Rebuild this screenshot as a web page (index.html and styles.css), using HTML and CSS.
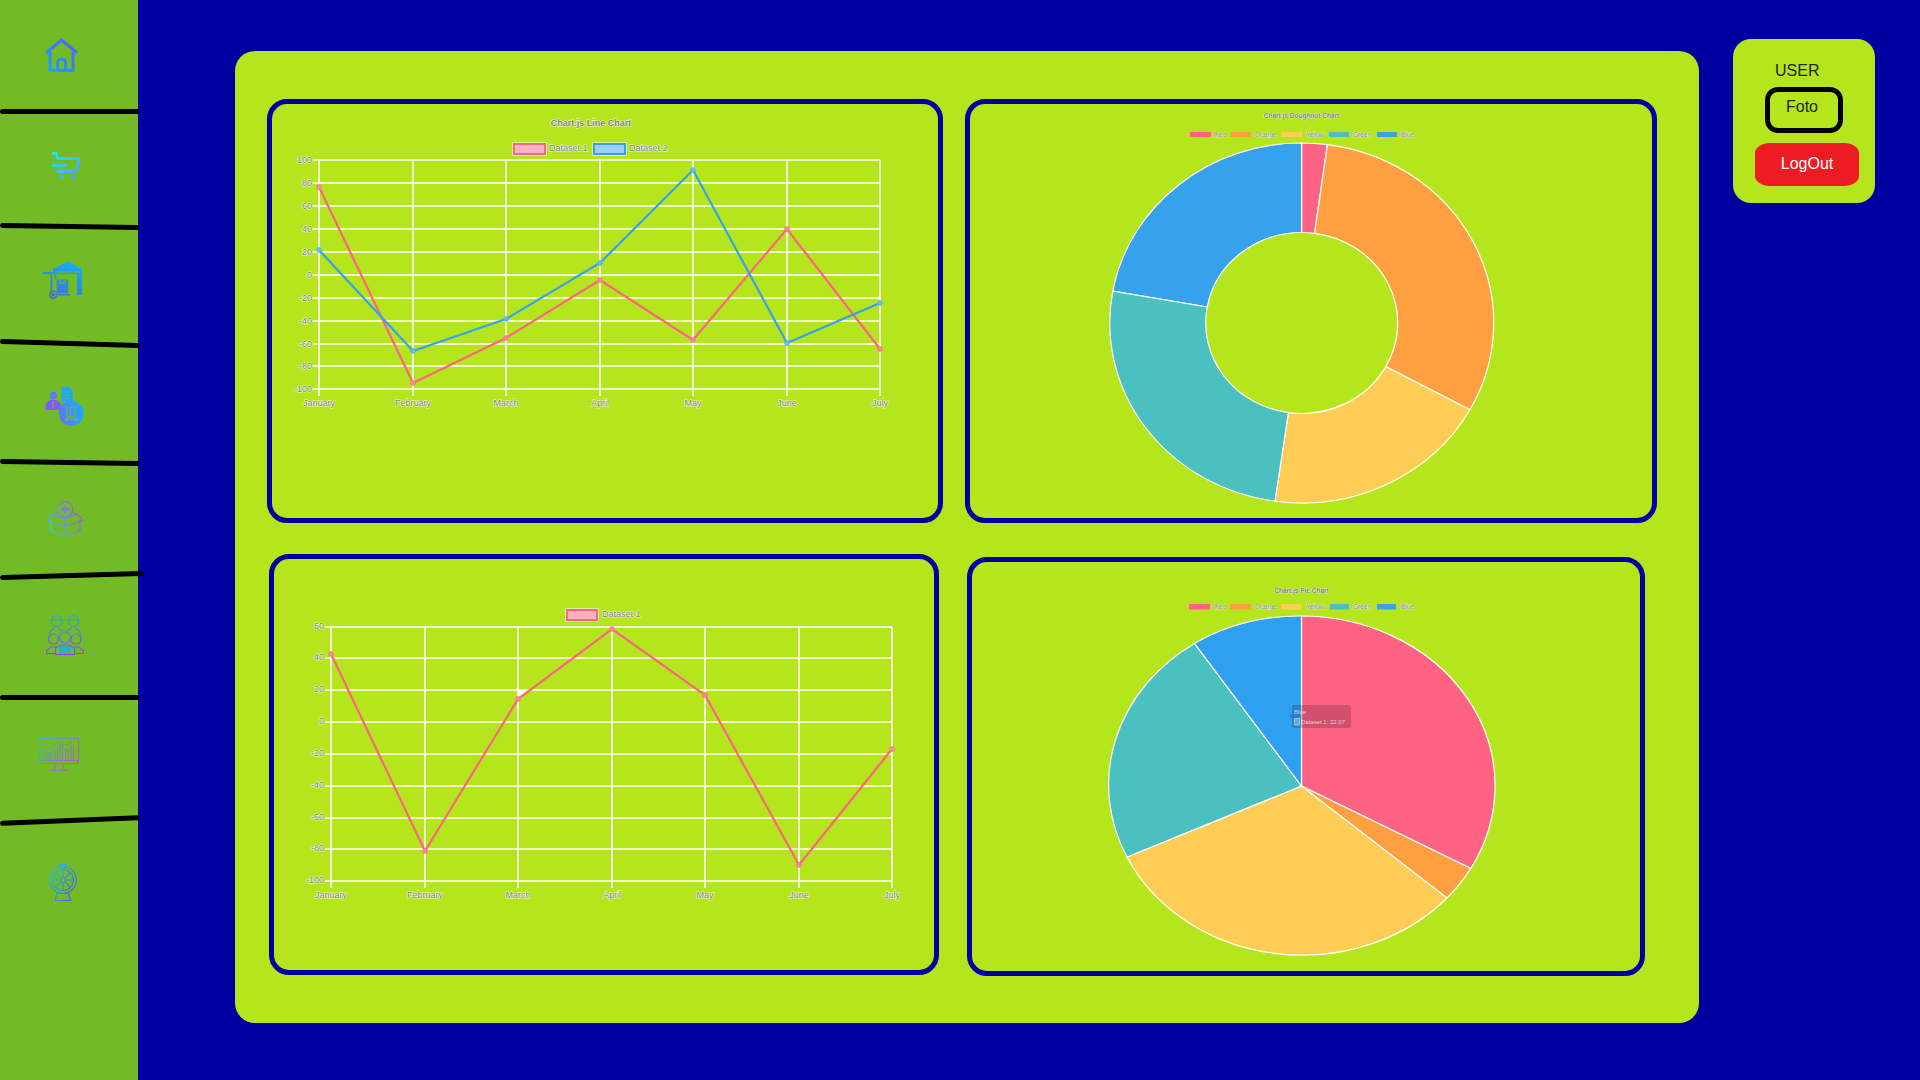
FILE: index.html
```html
<!DOCTYPE html>
<html lang="en">
<head>
    <meta charset="UTF-8">
    <meta name="viewport" content="width=device-width, initial-scale=1.0">
    <title>Dashboard</title>
    <link rel="stylesheet" href="styles.css">
</head>
<body>
    <nav class="sidebar">
        <a class="nav-item item-home" href="#">
            <svg class="icon icon-home" viewBox="0 0 33 34" fill="none" stroke="url(#gradHome)" stroke-width="3">
                <defs>
                    <linearGradient id="gradHome" gradientUnits="userSpaceOnUse" x1="0" y1="34" x2="33" y2="0">
                        <stop offset="0" stop-color="#12aaff"/>
                        <stop offset="1" stop-color="#5a55ff"/>
                    </linearGradient>
                </defs>
                <path d="M1 15 16.500 2 32 15"/>
                <path d="M5 14V32.300H28V14"/>
                <path d="M12.500 32V25a4 4 0 0 1 8 0v7"/>
            </svg>
        </a>
        <hr class="divider">
        <a class="nav-item item-cart" href="#">
            <svg class="icon icon-cart" viewBox="0 0 28 27" fill="none" stroke="url(#gradCart)" stroke-width="2.800">
                <defs>
                    <linearGradient id="gradCart" gradientUnits="userSpaceOnUse" x1="0" y1="0" x2="20" y2="27">
                        <stop offset="0" stop-color="#14f0ff"/>
                        <stop offset="1" stop-color="#4aa4ff"/>
                    </linearGradient>
                </defs>
                <path d="M0 1.300H4L6 6.500H27L24.300 19.500H5"/>
                <path d="M0 13.500H15"/>
                <circle cx="9.500" cy="25" r="2" fill="url(#gradCart)" stroke="none"/>
                <circle cx="21" cy="25" r="2" fill="url(#gradCart)" stroke="none"/>
            </svg>
        </a>
        <hr class="divider tilt-small">
        <a class="nav-item item-store" href="#">
            <svg class="icon icon-store" viewBox="0 0 39 38" fill="none" stroke="url(#gradStore)" stroke-width="1.800">
                <defs>
                    <linearGradient id="gradStore" gradientUnits="userSpaceOnUse" x1="30" y1="0" x2="12" y2="38">
                        <stop offset="0" stop-color="#0cb0ff"/>
                        <stop offset="1" stop-color="#4a70c4"/>
                    </linearGradient>
                </defs>
                <path d="M10 8 24.700 0.500 39 8V13H10Z" fill="url(#gradStore)" stroke="none"/>
                <path d="M12 11H37" stroke="#73bb26" stroke-width="1"/>
                <rect x="34" y="13" width="5" height="21" fill="url(#gradStore)" stroke="none"/>
                <path d="M0 12H8.500V33"/>
                <path d="M12 13 13 18"/>
                <rect x="13.700" y="18.300" width="11.600" height="14" fill="url(#gradStore)" stroke="none"/>
                <path d="M17 18.500V23L19.500 21.500 22 23V18.500" stroke="#73bb26" stroke-width="1"/>
                <circle cx="10.300" cy="33.700" r="3.500"/>
                <circle cx="10.300" cy="33.700" r="1"/>
                <path d="M15 33.700H27"/>
            </svg>
        </a>
        <hr class="divider tilt-medium">
        <a class="nav-item item-staff" href="#">
            <svg class="icon icon-staff" viewBox="0 0 40 41">
                <defs>
                    <linearGradient id="gradStaff" gradientUnits="userSpaceOnUse" x1="0" y1="30" x2="40" y2="16">
                        <stop offset="0" stop-color="#7a5cff"/>
                        <stop offset="1" stop-color="#12b4ff"/>
                    </linearGradient>
                </defs>
                <circle cx="8.300" cy="9.500" r="3.700" fill="#5a78ff"/>
                <path d="M0.500 24V21C0.500 16 4 13.800 8 13.800S16 16 16 21V24Z" fill="#7a5cff"/>
                <path d="M8 15V22" stroke="#73bb26" stroke-width="1.200"/>
                <path d="M16.700 0.700H24L27.700 4.500V15.700H16.700Z" fill="#1ca6ff"/>
                <path d="M19 6H25M19 9H25M19 12H25" stroke="#73bb26" stroke-width="0.800"/>
                <circle cx="26.300" cy="27.300" r="12.500" fill="url(#gradStaff)"/>
                <path d="M20 20.500H22V33H32M22 31H30V21H25V31" fill="none" stroke="#73bb26" stroke-width="1"/>
                <circle cx="21.500" cy="34" r="1.200" fill="#73bb26"/>
                <circle cx="31" cy="34" r="1.200" fill="#73bb26"/>
            </svg>
        </a>
        <hr class="divider tilt-small">
        <a class="nav-item item-box" href="#">
            <svg class="icon icon-box" viewBox="0 0 36 36" fill="none" stroke="url(#gradBox)" stroke-width="1.300">
                <defs>
                    <linearGradient id="gradBox" gradientUnits="userSpaceOnUse" x1="0" y1="30" x2="36" y2="10">
                        <stop offset="0" stop-color="#30d0e0"/>
                        <stop offset="1" stop-color="#a84ce8"/>
                    </linearGradient>
                </defs>
                <circle cx="18" cy="8.300" r="7.700"/>
                <path d="M18 4.500V12M14 8.300H22" stroke-width="2.400"/>
                <path d="M10.500 12 4.500 13.500 0.500 19 15 25 17.500 21 20 25 35.500 19 31 13.500 25.500 12"/>
                <path d="M4.500 13.500 17.500 17.500 31 13.500"/>
                <path d="M3.500 20.500V29.500L17.500 35 33 29.500V20.500"/>
                <path d="M17.500 21V35"/>
            </svg>
        </a>
        <hr class="divider tilt-back-medium">
        <a class="nav-item item-team" href="#">
            <svg class="icon icon-team" viewBox="0 0 38 41" fill="none" stroke="url(#gradTeam)" stroke-width="1.200">
                <defs>
                    <linearGradient id="gradTeam" gradientUnits="userSpaceOnUse" x1="19" y1="0" x2="19" y2="41">
                        <stop offset="0" stop-color="#18b8d0"/>
                        <stop offset="1" stop-color="#9a3ee8"/>
                    </linearGradient>
                    <pattern id="checks" width="3" height="3" patternUnits="userSpaceOnUse">
                        <rect width="1.500" height="1.500" fill="#8a48e0"/>
                        <rect x="1.500" y="1.500" width="1.500" height="1.500" fill="#8a48e0"/>
                    </pattern>
                </defs>
                <circle cx="10.700" cy="7" r="5.500"/>
                <circle cx="27.300" cy="7" r="5.500"/>
                <path d="M5.200 6H16.200M21.800 6H32.800"/>
                <path d="M8 13V15L4 17V22M13 13V15L17 17M25 13V15L21 17M30 13V15L34 17V22"/>
                <path d="M2.500 25a5 5 0 0 1 10 0c0 3-2 5-5 5s-5-2-5-5Z"/>
                <path d="M25 25a5 5 0 0 1 10 0c0 3-2 5-5 5s-5-2-5-5Z"/>
                <path d="M13.500 23.500a5.500 5.500 0 0 1 11 0c0 3-2.500 5.500-5.500 5.500s-5.500-2.500-5.500-5.500Z"/>
                <path d="M0.500 39.500V36.500L5 33H9.500L9.500 39.500ZM28.500 39.500V33H33L37.500 36.500V39.500ZM9.500 40.500V34L15 31H23L28.500 34V40.500Z"/>
                <rect x="13" y="32" width="12" height="8" fill="url(#checks)" stroke="none"/>
            </svg>
        </a>
        <hr class="divider">
        <a class="nav-item item-stats" href="#">
            <svg class="icon icon-stats" viewBox="0 0 40 33" fill="none" stroke="url(#gradStats)" stroke-width="1">
                <defs>
                    <linearGradient id="gradStats" gradientUnits="userSpaceOnUse" x1="0" y1="0" x2="40" y2="30">
                        <stop offset="0" stop-color="#18d0b8"/>
                        <stop offset="1" stop-color="#d83cd8"/>
                    </linearGradient>
                </defs>
                <rect x="0.500" y="0.500" width="39" height="25"/>
                <path d="M0.500 22.500H39.500"/>
                <path d="M5.500 6.500 11 10 21.500 3 27.500 7.500 33 4"/>
                <path d="M5 22V11H7.500V22M10 22V15H12.500V22M16 22V11H18.500V22M21 22V6.500H23.500V22M26.500 22V11.500H29V22M32 22V8.500H34.500V22"/>
                <path d="M17 26 16 32M24 26 25 32M10 32.300H30"/>
            </svg>
        </a>
        <hr class="divider tilt-back-large">
        <a class="nav-item item-fan" href="#">
            <svg class="icon icon-fan" viewBox="0 0 28 37" fill="none" stroke="url(#gradFan)" stroke-width="1.200">
                <defs>
                    <linearGradient id="gradFan" gradientUnits="userSpaceOnUse" x1="0" y1="10" x2="28" y2="24">
                        <stop offset="0" stop-color="#18c8d0"/>
                        <stop offset="1" stop-color="#4a60f0"/>
                    </linearGradient>
                </defs>
                <circle cx="14" cy="16" r="13.500"/>
                <circle cx="14" cy="16" r="10.500"/>
                <circle cx="14" cy="16" r="2.500"/>
                <path d="M14 5.500V13.500M14 18.500V26.500M3.500 16H11.500M16.500 16H24.500M6.600 8.600 12.200 14.200M15.800 17.800 21.400 23.400M21.400 8.600 15.800 14.200M12.200 17.800 6.600 23.400"/>
                <path d="M10.500 0.500H17.500L15.500 5H12.500Z"/>
                <path d="M8 29.500H19.500L21.500 36.500H6Z"/>
            </svg>
        </a>
    </nav>

    <main class="dashboard">
        <div class="chart-row">
            <section class="chart-card card-line">
                <svg class="chart" viewBox="272 104 666 414">
                    <text class="chart-title" x="591" y="126">Chart.js Line Chart</text>
                    <rect class="legend-box" x="514" y="144" width="31" height="10" fill="#ffb1c1" stroke="#ff6384"/>
                    <text class="chart-label" x="549" y="151">Dataset 1</text>
                    <rect class="legend-box" x="594" y="144" width="31" height="10" fill="#9ad0f5" stroke="#36a2eb"/>
                    <text class="chart-label" x="629" y="151">Dataset 2</text>

                    <path class="grid" d="M313 160H880M313 183H880M313 206H880M313 229H880M313 252H880M313 275H880M313 298H880M313 321H880M313 344H880M313 366H880M313 389H880"/>
                    <path class="grid" d="M319 160V396M413 160V396M506 160V396M600 160V396M693 160V396M787 160V396M880 160V396"/>

                    <g class="y-ticks">
                        <text class="chart-label" x="312" y="163">100</text>
                        <text class="chart-label" x="312" y="186">80</text>
                        <text class="chart-label" x="312" y="209">60</text>
                        <text class="chart-label" x="312" y="232">40</text>
                        <text class="chart-label" x="312" y="255">20</text>
                        <text class="chart-label" x="312" y="278">0</text>
                        <text class="chart-label" x="312" y="301">-20</text>
                        <text class="chart-label" x="312" y="324">-40</text>
                        <text class="chart-label" x="312" y="347">-60</text>
                        <text class="chart-label" x="312" y="369">-80</text>
                        <text class="chart-label" x="312" y="392">-100</text>
                    </g>
                    <g class="x-ticks">
                        <text class="chart-label" x="319" y="406">January</text>
                        <text class="chart-label" x="413" y="406">February</text>
                        <text class="chart-label" x="506" y="406">March</text>
                        <text class="chart-label" x="600" y="406">April</text>
                        <text class="chart-label" x="693" y="406">May</text>
                        <text class="chart-label" x="787" y="406">June</text>
                        <text class="chart-label" x="880" y="406">July</text>
                    </g>

                    <polyline class="line line-red" points="319,187 413,383 506,338 600,280 693,340 787,229 880,349"/>
                    <polyline class="line line-blue" points="319,250 413,351 506,319 600,263 693,170 787,343 880,303"/>
                    <g class="points-red">
                        <circle cx="319" cy="187" r="2.500"/><circle cx="413" cy="383" r="2.500"/><circle cx="506" cy="338" r="2.500"/><circle cx="600" cy="280" r="2.500"/><circle cx="693" cy="340" r="2.500"/><circle cx="787" cy="229" r="2.500"/><circle cx="880" cy="349" r="2.500"/>
                    </g>
                    <g class="points-blue">
                        <circle cx="319" cy="250" r="2.500"/><circle cx="413" cy="351" r="2.500"/><circle cx="506" cy="319" r="2.500"/><circle cx="600" cy="263" r="2.500"/><circle cx="693" cy="170" r="2.500"/><circle cx="787" cy="343" r="2.500"/><circle cx="880" cy="303" r="2.500"/>
                    </g>
                </svg>
            </section>
            <section class="chart-card card-doughnut">
                <svg class="chart" viewBox="970 104 682 414">
                    <text class="chart-title small-title" x="1301.500" y="118">Chart.js Doughnut Chart</text>
                    <g class="legend-small">
                        <rect x="1190" y="132" width="21" height="5" fill="#ff6384"/>
                        <rect x="1231" y="132" width="20" height="5" fill="#ff9f40"/>
                        <rect x="1282" y="132" width="20" height="5" fill="#ffcd56"/>
                        <rect x="1329" y="132" width="20" height="5" fill="#4bc0c0"/>
                        <rect x="1377" y="132" width="20" height="5" fill="#36a2eb"/>
                        <text class="chart-label" x="1214" y="136.500">Red</text>
                        <text class="chart-label" x="1255" y="136.500">Orange</text>
                        <text class="chart-label" x="1306" y="136.500">Yellow</text>
                        <text class="chart-label" x="1353" y="136.500">Green</text>
                        <text class="chart-label" x="1401" y="136.500">Blue</text>
                    </g>
                    <path class="slice" fill="#36a2eb" d="M1112.800 291.100A192 180 0 0 1 1301.700 143V232.500A96 90.500 0 0 0 1207.200 307Z"/>
                    <path class="slice" fill="#ff6384" d="M1301.700 143A192 180 0 0 1 1327.400 144.600L1314.600 233.300A96 90.500 0 0 0 1301.700 232.500Z"/>
                    <path class="slice" fill="#ff9f40" d="M1327.400 144.600A192 180 0 0 1 1469.900 409.800L1385.800 366.600A96 90.500 0 0 0 1314.600 233.300Z"/>
                    <path class="slice" fill="#ffcd56" d="M1469.900 409.800A192 180 0 0 1 1275 501.200L1288.400 412.600A96 90.500 0 0 0 1385.800 366.600Z"/>
                    <path class="slice" fill="#4bc0c0" d="M1275 501.200A192 180 0 0 1 1112.800 291.100L1207.200 307A96 90.500 0 0 0 1288.400 412.600Z"/>
                </svg>
            </section>
        </div>
        <div class="chart-row row-bottom">
            <section class="chart-card card-line-single">
                <svg class="chart" viewBox="274 559 660 411">
                    <rect class="legend-box" x="567" y="610" width="30" height="10" fill="#ffb1c1" stroke="#ff6384"/>
                    <text class="chart-label" x="602" y="617">Dataset 1</text>

                    <path class="grid" d="M325 627H892M325 658H892M325 690H892M325 722H892M325 754H892M325 786H892M325 818H892M325 849H892M325 881H892"/>
                    <path class="grid" d="M331 627V888M425 627V888M518 627V888M612 627V888M705 627V888M799 627V888M892 627V888"/>
                    <path d="M518 690H528L518 699Z" fill="#fff"/>

                    <g class="y-ticks">
                        <text class="chart-label" x="324" y="629">60</text>
                        <text class="chart-label" x="324" y="660">40</text>
                        <text class="chart-label" x="324" y="692">20</text>
                        <text class="chart-label" x="324" y="724">0</text>
                        <text class="chart-label" x="324" y="756">-20</text>
                        <text class="chart-label" x="324" y="788">-40</text>
                        <text class="chart-label" x="324" y="820">-60</text>
                        <text class="chart-label" x="324" y="851">-80</text>
                        <text class="chart-label" x="324" y="883">-100</text>
                    </g>
                    <g class="x-ticks">
                        <text class="chart-label" x="331" y="898">January</text>
                        <text class="chart-label" x="425" y="898">February</text>
                        <text class="chart-label" x="518" y="898">March</text>
                        <text class="chart-label" x="612" y="898">April</text>
                        <text class="chart-label" x="705" y="898">May</text>
                        <text class="chart-label" x="799" y="898">June</text>
                        <text class="chart-label" x="892" y="898">July</text>
                    </g>

                    <polyline class="line line-red" points="331,654 425,851 518,699 612,629 705,695 799,865 892,749"/>
                    <g class="points-red">
                        <circle cx="331" cy="654" r="2.500"/><circle cx="425" cy="851" r="2.500"/><circle cx="518" cy="699" r="2.500"/><circle cx="612" cy="629" r="2.500"/><circle cx="705" cy="695" r="2.500"/><circle cx="799" cy="865" r="2.500"/><circle cx="892" cy="749" r="2.500"/>
                    </g>
                </svg>
            </section>
            <section class="chart-card card-pie">
                <svg class="chart" viewBox="972 562 668 409">
                    <text class="chart-title small-title" x="1301.500" y="593">Chart.js Pie Chart</text>
                    <g class="legend-small">
                        <rect x="1189" y="604" width="21" height="5.500" fill="#ff6384"/>
                        <rect x="1230" y="604" width="21" height="5.500" fill="#ff9f40"/>
                        <rect x="1281" y="604" width="20" height="5.500" fill="#ffcd56"/>
                        <rect x="1330" y="604" width="19" height="5.500" fill="#4bc0c0"/>
                        <rect x="1377" y="604" width="19" height="5.500" fill="#36a2eb"/>
                        <text class="chart-label" x="1214" y="609">Red</text>
                        <text class="chart-label" x="1255" y="609">Orange</text>
                        <text class="chart-label" x="1306" y="609">Yellow</text>
                        <text class="chart-label" x="1353" y="609">Green</text>
                        <text class="chart-label" x="1401" y="609">Blue</text>
                    </g>
                    <path class="slice" fill="#ff6384" d="M1301.500 786V616A193.500 170 0 0 1 1470.800 868.400Z"/>
                    <path class="slice" fill="#ff9f40" d="M1301.500 786 1470.800 868.400A193.500 170 0 0 1 1447 898Z"/>
                    <path class="slice" fill="#ffcd56" d="M1301.500 786 1447 898A193.500 170 0 0 1 1127 857Z"/>
                    <path class="slice" fill="#4bc0c0" d="M1301.500 786 1127 857A193.500 170 0 0 1 1194.500 643.400Z"/>
                    <path class="slice" fill="#2f9fef" d="M1301.500 786 1194.500 643.400A193.500 170 0 0 1 1301.500 616Z"/>

                    <g class="tooltip">
                        <path class="tooltip-bg" d="M1294 705H1349a2 2 0 0 1 2 2V726a2 2 0 0 1-2 2H1294a2 2 0 0 1-2-2V718L1289 716 1292 714V707a2 2 0 0 1 2-2Z"/>
                        <rect class="tooltip-swatch" x="1294.500" y="718.500" width="5" height="6.500"/>
                        <text class="tooltip-text" x="1294" y="714">Blue</text>
                        <text class="tooltip-text" x="1301" y="723.500">Dataset 1: 22.07</text>
                    </g>
                </svg>
            </section>
        </div>
    </main>

    <aside class="user-panel">
        <p class="user-name">USER</p>
        <div class="user-photo">Foto</div>
        <button class="logout-btn">LogOut</button>
    </aside>
</body>
</html>
```

FILE: styles.css
```css
html, body {
    height: 100%;
}
body {
    font-family: "Liberation Sans", Arial, sans-serif;
    background-color: #0000a0;
    margin: 0;
    display: flex;
    align-items: flex-start;
    overflow: hidden;
}

/* sidebar */
.sidebar {
    width: 138px;
    height: 1080px;
    flex-shrink: 0;
    background: #73bb26;
}
.nav-item {
    display: block;
    overflow: hidden;
}
.item-home { height: 109px; }
.item-cart { height: 110px; }
.item-store { height: 112px; }
.item-staff { height: 114px; }
.item-box { height: 108px; }
.item-team { height: 117px; }
.item-stats { height: 118px; }
.item-fan { height: 257px; }
.icon {
    display: block;
}
.icon-home { width: 33px; height: 34px; margin: 38px 0 0 45px; }
.icon-cart { width: 28px; height: 27px; margin: 38px 0 0 52px; }
.icon-store { width: 39px; height: 38px; margin: 32px 0 0 43px; }
.icon-staff { width: 40px; height: 41px; margin: 40px 0 0 45px; }
.icon-box { width: 36px; height: 36px; margin: 36px 0 0 47px; }
.icon-team { width: 38px; height: 41px; margin: 36px 0 0 46px; }
.icon-stats { width: 40px; height: 33px; margin: 38px 0 0 39px; }
.icon-fan { width: 28px; height: 37px; margin: 41px 0 0 49px; }
.divider {
    width: 140px;
    height: 5px;
    margin: 0;
    border: 0;
    border-radius: 3px;
    background: #000;
    position: relative;
    z-index: 1;
}
.tilt-small { transform: rotate(0.8deg); }
.tilt-medium { transform: rotate(1.6deg); }
.tilt-back-medium { width: 144px; transform: rotate(-1.6deg); }
.tilt-back-large { transform: rotate(-2.4deg); }

/* main card */
.dashboard {
    box-sizing: border-box;
    width: 1464px;
    height: 972px;
    margin: 51px 0 0 97px;
    padding: 48px 0 0 32px;
    background: #b5e61d;
    border-radius: 20px;
    flex-shrink: 0;
}
.chart-row {
    display: flex;
    align-items: flex-start;
    gap: 22px;
}
.row-bottom {
    margin: 32px 0 0 2px;
    gap: 28px;
}
.chart-card {
    box-sizing: border-box;
    border: 5px solid #0000a0;
    border-radius: 20px;
}
.card-line { width: 676px; height: 424px; }
.card-doughnut { width: 692px; height: 424px; }
.card-line-single { width: 670px; height: 421px; margin-top: -1px; }
.card-pie { width: 678px; height: 419px; margin-top: 2px; }
.chart {
    display: block;
    width: 100%;
    height: 100%;
}

/* chart parts */
.grid {
    fill: none;
    stroke: #fff;
    stroke-width: 1.6;
}
.line {
    fill: none;
    stroke-width: 2.200;
}
.line-red { stroke: #ff6384; }
.line-blue { stroke: #36a2eb; }
.points-red circle { fill: #ff86a0; stroke: #ff6384; stroke-width: 0.5; }
.points-blue circle { fill: #6cbcf2; stroke: #36a2eb; stroke-width: 0.5; }
.chart-label,
.chart-title {
    font-size: 9px;
    fill: #828282;
    stroke: rgba(255, 255, 255, 0.85);
    stroke-width: 1;
    paint-order: stroke;
}
.chart-title {
    font-weight: bold;
    text-anchor: middle;
}
.small-title {
    font-size: 6.500px;
    stroke-width: 0.7;
}
.legend-box {
    stroke-width: 2;
    outline: 1px solid #ffffff88;
}
.legend-small .chart-label {
    font-size: 6.500px;
    stroke-width: 0.7;
}
.y-ticks .chart-label {
    text-anchor: end;
}
.x-ticks .chart-label {
    text-anchor: middle;
}
.slice {
    stroke: #fff;
    stroke-width: 1.2;
}
.tooltip-bg {
    fill: rgba(0, 0, 0, 0.18);
}
.tooltip-swatch {
    fill: rgba(255, 255, 255, 0.3);
    stroke: rgba(255, 255, 255, 0.6);
    stroke-width: 0.7;
}
.tooltip-text {
    font-size: 6px;
    fill: rgba(255, 255, 255, 0.7);
}

/* user panel */
.user-panel {
    box-sizing: border-box;
    width: 142px;
    height: 164px;
    margin: 39px 0 0 34px;
    padding-top: 23px;
    background: #b5e61d;
    border-radius: 18px;
    flex-shrink: 0;
    color: #222;
    font-size: 16px;
    line-height: 18px;
}
.user-name {
    margin: 0 0 7px 42px;
}
.user-photo {
    box-sizing: border-box;
    width: 78px;
    height: 46px;
    margin-left: 32px;
    padding: 6px 0 0 16px;
    border: 5px solid #000;
    border-radius: 13px;
}
.logout-btn {
    display: block;
    width: 104px;
    height: 43px;
    margin: 10px 0 0 22px;
    padding: 0 0 2px;
    border: 0;
    border-radius: 15px / 10px;
    background: #ed1c24;
    color: #fff;
    font-family: inherit;
    font-size: 16px;
}
```
